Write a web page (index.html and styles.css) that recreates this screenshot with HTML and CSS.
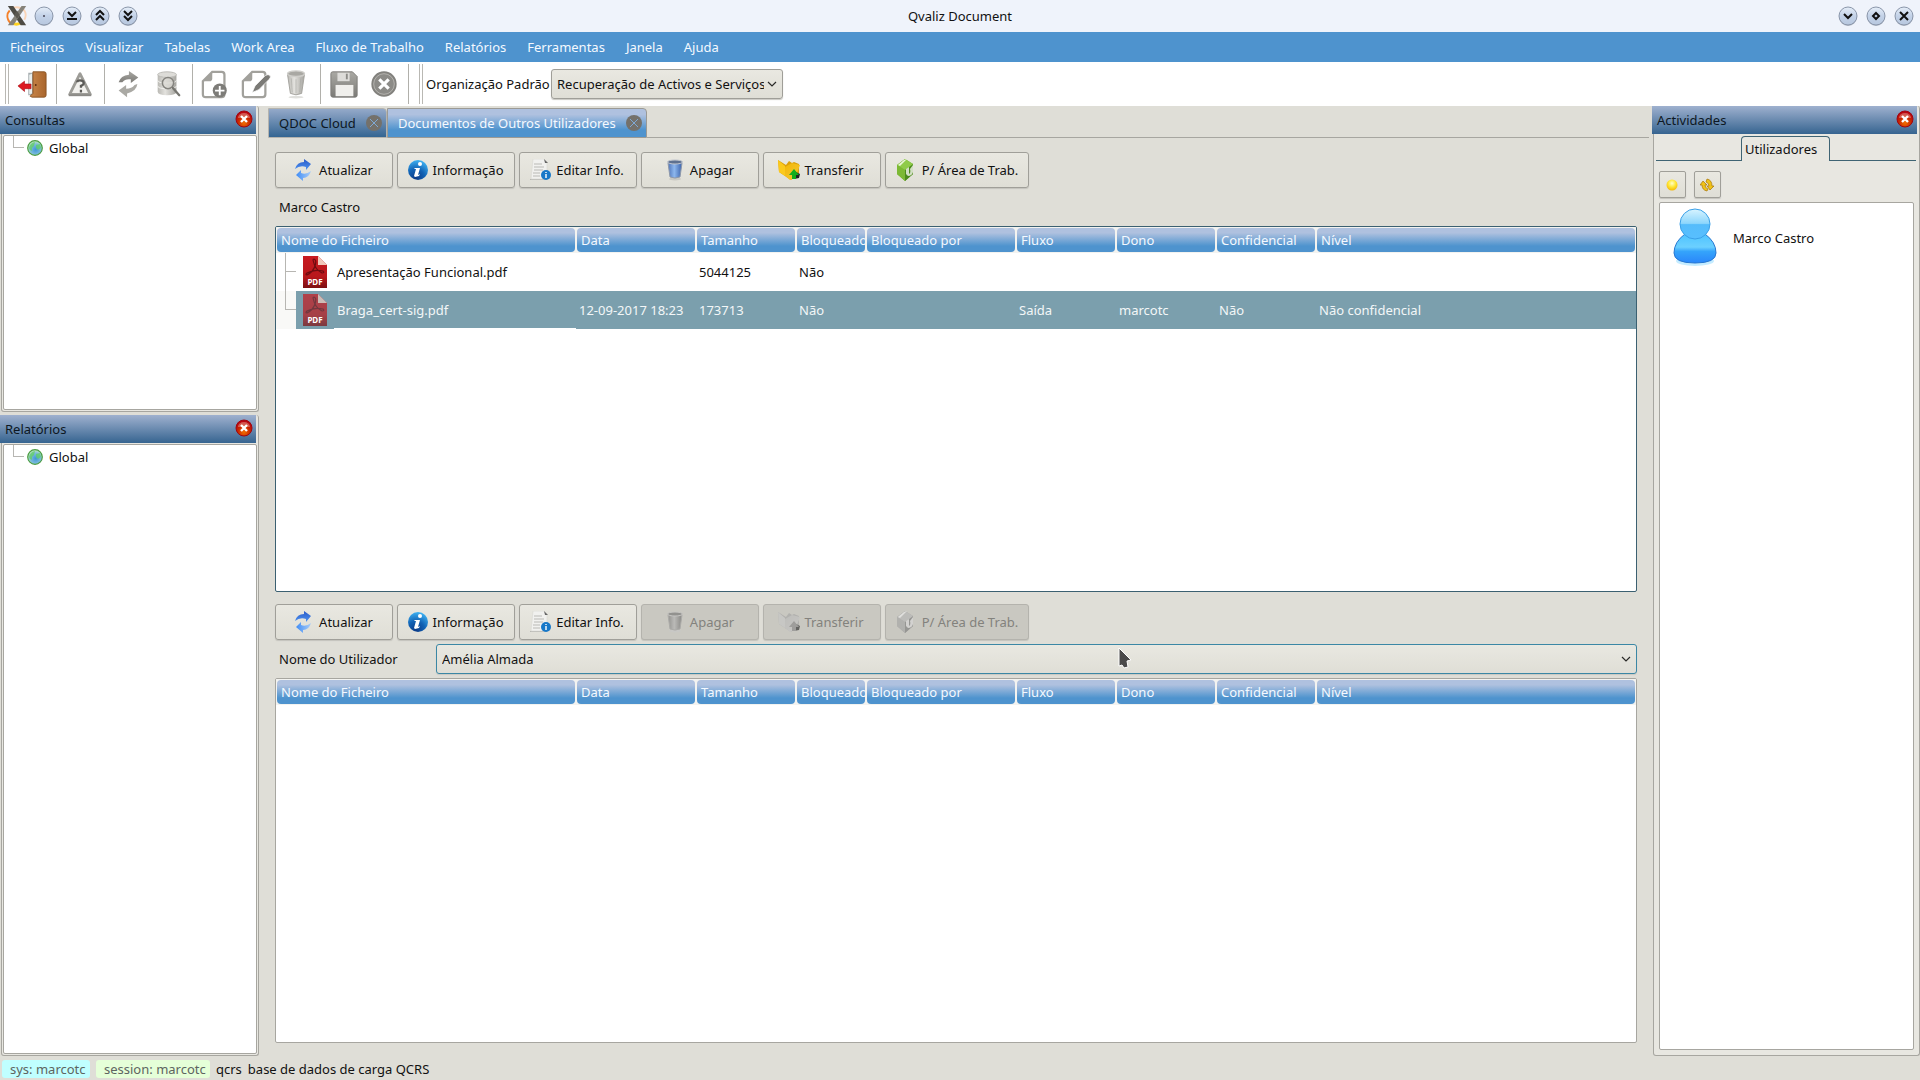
FILE: index.html
```html
<!DOCTYPE html>
<html lang="pt">
<head>
<meta charset="utf-8">
<title>Qvaliz Document</title>
<link rel="stylesheet" href="styles.css">
</head>
<body>
<svg class="defs" aria-hidden="true">
  <defs>
    <linearGradient id="gWin" x1="0" y1="0" x2="0" y2="1"><stop offset="0" stop-color="#e6eef8"/><stop offset=".5" stop-color="#c3d2e8"/><stop offset="1" stop-color="#b7c7de"/></linearGradient>
    <linearGradient id="gBlue" x1="0" y1="0" x2="0" y2="1"><stop offset="0" stop-color="#2a5bc8"/><stop offset="1" stop-color="#4f93f0"/></linearGradient>
    <linearGradient id="gBlue2" x1="0" y1="0" x2="1" y2="0"><stop offset="0" stop-color="#3f8cf5"/><stop offset="1" stop-color="#a9cdf8"/></linearGradient>
    <linearGradient id="gGrey" x1="0" y1="0" x2="0" y2="1"><stop offset="0" stop-color="#aaa9a4"/><stop offset="1" stop-color="#7b7a76"/></linearGradient>
    <linearGradient id="gLight" x1="0" y1="0" x2="1" y2="0"><stop offset="0" stop-color="#b9b8b3"/><stop offset=".4" stop-color="#e3e2de"/><stop offset="1" stop-color="#a5a49f"/></linearGradient>
    <linearGradient id="gBin" x1="0" y1="0" x2="1" y2="0"><stop offset="0" stop-color="#4f74b8"/><stop offset=".45" stop-color="#8db7ee"/><stop offset="1" stop-color="#3a62ab"/></linearGradient>
    <radialGradient id="gInfo" cx=".4" cy=".9" r=".9"><stop offset="0" stop-color="#0b3a86"/><stop offset=".5" stop-color="#1263b5"/><stop offset="1" stop-color="#3fb2f2"/></radialGradient>
    <linearGradient id="gDoor" x1="0" y1="0" x2="1" y2="0"><stop offset="0" stop-color="#c9864a"/><stop offset="1" stop-color="#a9652c"/></linearGradient>
    <linearGradient id="gPdf" x1="0" y1="0" x2="0" y2="1"><stop offset="0" stop-color="#c81a20"/><stop offset=".65" stop-color="#b8181c"/><stop offset="1" stop-color="#7c0f12"/></linearGradient>
    <radialGradient id="gRed" cx=".5" cy=".75" r=".7"><stop offset="0" stop-color="#f07000"/><stop offset=".55" stop-color="#c82400"/><stop offset="1" stop-color="#b80010"/></radialGradient>
    <radialGradient id="gGlobe" cx=".55" cy=".6" r=".6"><stop offset="0" stop-color="#3f96d8"/><stop offset=".6" stop-color="#7dbcdc"/><stop offset="1" stop-color="#c4eeb4"/></radialGradient>
    <radialGradient id="gSun" cx=".5" cy=".35" r=".65"><stop offset="0" stop-color="#ffffc8"/><stop offset=".5" stop-color="#ffe83a"/><stop offset="1" stop-color="#f5b800"/></radialGradient>
    <linearGradient id="gHead" x1="0" y1="0" x2="0" y2="1"><stop offset="0" stop-color="#d8f4ff"/><stop offset=".48" stop-color="#8dd6fc"/><stop offset=".52" stop-color="#55bcfb"/><stop offset="1" stop-color="#58bfff"/></linearGradient>
    <linearGradient id="gBody" x1="0" y1="0" x2="0" y2="1"><stop offset="0" stop-color="#4ec3ff"/><stop offset=".45" stop-color="#6cd0ff"/><stop offset=".6" stop-color="#35a4fb"/><stop offset="1" stop-color="#2a86fa"/></linearGradient>
    <linearGradient id="gFold" x1="0" y1="0" x2="1" y2="1"><stop offset="0" stop-color="#f2b606"/><stop offset="1" stop-color="#f6c832"/></linearGradient>

    <symbol id="i-win" viewBox="0 0 20 20"><circle cx="10" cy="11" r="9" fill="#8b95a5" opacity=".6"/><circle cx="10" cy="10" r="9" fill="url(#gWin)" stroke="#8a96aa"/></symbol>
    <symbol id="i-x" viewBox="0 0 24 24"><path d="M4 6a9 9 0 0 0-2 9q1 4 5 6" fill="none" stroke="#f4802a" stroke-width="2"/><path d="M8 3q7-2 12 3 3 5 0 10" fill="none" stroke="#fbd5b8" stroke-width="2"/><path d="M7 20q4 2 9 0" fill="none" stroke="#ffd21f" stroke-width="3"/><path d="M2 1h6l14 21h-6z" fill="#4d4b45"/><path d="M17 1h5L8 22H2z" fill="#85827a"/><path d="M9 10l3-4 3 5-3 4z" fill="#5a5750"/></symbol>
    <symbol id="i-close" viewBox="0 0 18 18"><circle cx="9" cy="9" r="8" fill="url(#gRed)" stroke="#a00610"/><path d="M3 8a6 5 0 0 1 12 0z" fill="#fff" opacity=".3"/><path d="M6 6l6 6M12 6l-6 6" stroke="#fff" stroke-width="2.4"/></symbol>
    <symbol id="i-tabx" viewBox="0 0 16 16"><circle cx="8" cy="8" r="8" fill="#74716b"/><path d="M4 4l8 8M12 4l-8 8" stroke="#7fa9d3" stroke-width="1"/></symbol>
    <symbol id="i-globe" viewBox="0 0 16 16"><circle cx="8" cy="8" r="7.3" fill="url(#gGlobe)" stroke="#4a9c42" stroke-width="1.2"/><path d="M2 8q1-5 6-6l-1 4-2 2v3q-2 0-3-3M9 5l4-1 1 4-3 2-2-2z" fill="#62cf60" opacity=".75"/></symbol>
    <symbol id="i-door" viewBox="0 0 32 32"><path d="M12 4h6v24h-6z" fill="#a7aeb0"/><path d="M13 6l3-1v21l-3 1z" fill="#e9eeee"/><path d="M17 3h12q2 0 2 2v23q0 2-2 2H16l-2-1 3-3z" fill="url(#gDoor)" stroke="#8a5424"/><circle cx="20" cy="17" r="1" fill="#5b2c0e"/><path d="M1 18l7-5v3h7v5H8v3z" fill="#dd1a22" stroke="#a50c12" stroke-width=".6"/></symbol>
    <symbol id="i-warn" viewBox="0 0 32 32"><path d="M16 5L5 27h22z" fill="#f2f1ee" stroke="#9d9c97" stroke-width="3" stroke-linejoin="round"/><path d="M4 28h24" stroke="#8b8a86" stroke-width="2"/><path d="M13 14q0-2 3-2 4 0 4 3 0 2-3 3v2M17 22v3" fill="none" stroke="#5c5b58" stroke-width="2.4"/></symbol>
    <symbol id="i-sync-g" viewBox="0 0 32 32"><path d="M6 14q2-7 11-8V2l10 7-8 6v-4q-6-1-9 3z" fill="url(#gGrey)"/><path d="M26 16q-1 8-11 10v4L6 23l8-6v4q6 0 9-4z" fill="#aaa9a4"/></symbol>
    <symbol id="i-dbfind" viewBox="0 0 32 32"><path d="M5 6v18q0 4 10 4t10-4V6z" fill="url(#gLight)"/><path d="M5 12q0 3 10 3t10-3M5 18q0 3 10 3t10-3" fill="none" stroke="#f2f2ef"/><ellipse cx="15" cy="6" rx="10" ry="3" fill="#dddcd8" stroke="#bab9b4"/><circle cx="16" cy="15" r="6" fill="#d8d7d2" fill-opacity=".7" stroke="#85847f" stroke-width="1.6"/><path d="M21 20l7 8" stroke="#777671" stroke-width="2.4" stroke-linecap="round"/></symbol>
    <symbol id="i-docadd" viewBox="0 0 32 32"><path d="M12 3h10q3 0 3 3v21q0 3-3 3H5q-3 0-3-3V13z" fill="#fff" stroke="#a2a19c" stroke-width="2.4"/><path d="M12 3v7q0 3-3 3H2z" fill="#a2a19c"/><circle cx="20" cy="23" r="7.5" fill="#7d7c78"/><path d="M20 18v10M15 23h10" stroke="#fff" stroke-width="2"/></symbol>
    <symbol id="i-docedit" viewBox="0 0 32 32"><path d="M12 3h11q3 0 3 3v21q0 3-3 3H5q-3 0-3-3V13z" fill="#fff" stroke="#a2a19c" stroke-width="2.4"/><path d="M12 3v7q0 3-3 3H2z" fill="#a2a19c"/><path d="M12 25l3-7L26 7q3-2 5 0 1 2-1 4L19 22z" fill="#7b7a76" stroke="#fff" stroke-width=".7"/></symbol>
    <symbol id="i-bin-g" viewBox="0 0 32 32"><ellipse cx="16" cy="30" rx="8" ry="1.5" fill="#e0e0dd"/><path d="M7 6h18l-3 20q-6 3-12 0z" fill="url(#gLight)" stroke="#a3a29d"/><path d="M11 10l1 15M16 11v15M21 10l-1 15" stroke="#a8a7a2" opacity=".6"/><ellipse cx="16" cy="5" rx="9" ry="3" fill="#a9a8a3" stroke="#cfceca" stroke-width="1.5"/></symbol>
    <symbol id="i-save" viewBox="0 0 32 32"><path d="M4 3h21l5 5v20q0 2-2 2H4q-2 0-2-2V5q0-2 2-2z" fill="url(#gGrey)" stroke="#7d7c77"/><path d="M9 4h13v9H9z" fill="#dddcd9"/><path d="M18 5h2v6h-2z" fill="#8d8c88"/><path d="M7 17h19v12H7z" fill="#f0efec"/></symbol>
    <symbol id="i-cancel" viewBox="0 0 32 32"><circle cx="16" cy="16" r="12.5" fill="#8c8b87" stroke="#82817d" stroke-width="2"/><circle cx="16" cy="16" r="11" fill="none" stroke="#c6c5c1" stroke-width=".7"/><path d="M11 11l10 10M21 11L11 21" stroke="#fff" stroke-width="3.4"/></symbol>
    <symbol id="i-sync" viewBox="0 0 22 22"><path d="M2 10Q4 3 11 3V0l7 5-5 6V8Q7 6 2 10z" fill="url(#gBlue)"/><path d="M18 12q-2 7-8 7v3l-7-6 5-5v3q5 2 10-2z" fill="url(#gBlue2)"/></symbol>
    <symbol id="i-info" viewBox="0 0 22 22"><circle cx="11" cy="11" r="10" fill="url(#gInfo)"/><circle cx="13" cy="5" r="2" fill="#fff"/><path d="M8 9h5l-2 7 2-1-1 2-4 1-1-1 2-7H7z" fill="#fff"/></symbol>
    <symbol id="i-edit" viewBox="0 0 22 22"><path d="M0 20h15v1H0z" fill="#b9b9b5"/><path d="M3 0h11l3 4v16H1z" fill="#f1f1ef" stroke="#d6d6d2" stroke-width=".6"/><path d="M14 0l4 4h-3z" fill="#666"/><path d="M4 5h8M4 8h10M4 11h9M3 14h7M3 17h7" stroke="#b9b9b5"/><circle cx="16" cy="16" r="5" fill="#1878c8"/><path d="M16 13v1M16 15v4" stroke="#fff" stroke-width="1.4"/></symbol>
    <symbol id="i-bin" viewBox="0 0 22 22"><ellipse cx="11" cy="20" rx="6" ry="1.5" fill="#c9c8c2"/><path d="M4 4h14l-2 14q-5 2-10 0z" fill="url(#gBin)" stroke="#8f99aa"/><ellipse cx="11" cy="3" rx="7.5" ry="2" fill="#5e7190" stroke="#c0c5ce"/></symbol>
    <symbol id="i-folder" viewBox="0 0 22 22"><path d="M0 1l8 5 3-4 3 2 2-1 5 2v9l-8 7L1 13z" fill="#dba00a"/><path d="M7 8l7-4 8 2-5 13-5 2-6-5z" fill="url(#gFold)"/><path d="M0 1l7 6v10l-6-4z" fill="#fbc91c"/><path d="M16 20l5-1 1-4-4-2z" fill="#222"/><path d="M16 10l5 6h-3v4h-4v-4h-3z" fill="#12ad1c"/></symbol>
    <symbol id="i-cube" viewBox="0 0 22 22"><path d="M11 0l8 5v10l-8 7-8-7V6z" fill="#68a52b"/><path d="M3 6l8 5v11l-8-7z" fill="#7cb934"/><path d="M11 11l8-6v10l-8 7z" fill="#4c8a1d"/><path d="M11 0l8 5-8 6-8-5z" fill="#8fcb49"/><path d="M10 1l3-1-7 7-2-1z" fill="#e9f5d8"/><path d="M12 10l3-2v7q2-1 1-5l3-4v7q-1 4-5 4l-2-2z" fill="#d2dfc4"/></symbol>
    <symbol id="i-pdf" viewBox="0 0 24 32"><path d="M0 0h15l9 9v23H0z" fill="url(#gPdf)"/><path d="M15 0l9 9h-9z" fill="#f0c9bb"/><path d="M11 3q3 1 1 7-2 6-8 9-2 0 0-2 7-4 16-2 2 2-1 2-7-3-9-13 0-1 1-1z" fill="none" stroke="#6d0c10" stroke-width="1.2"/></symbol>
    <symbol id="i-sun" viewBox="0 0 14 14"><circle cx="7" cy="7" r="5.5" fill="url(#gSun)"/></symbol>
    <symbol id="i-cycle" viewBox="0 0 14 14"><path d="M0 7l3-4 4 4H5q0 3 3 4l-1 2q-5-1-5-6zM14 8l-4 4-3-4h2q0-3-3-4l1-3q5 1 5 7z" fill="#f0c216" stroke="#a8750a" stroke-width=".7"/></symbol>
    <symbol id="i-user" viewBox="0 0 44 60"><ellipse cx="22" cy="53" rx="19" ry="5" fill="#9fe0ff" opacity=".6"/><path d="M12 26Q1 34 1 45q0 10 21 10t21-10q0-11-11-19z" fill="url(#gBody)" stroke="#2877d0"/><circle cx="22" cy="16" r="15" fill="url(#gHead)" stroke="#3aa0e8"/></symbol>
    <symbol id="i-down" viewBox="0 0 12 8"><path d="M2 2l4 4 4-4" fill="none" stroke="#2a2a28" stroke-width="1.2"/></symbol>
  </defs>
</svg>

<div class="window">
  <header class="titlebar">
    <div class="winbtns">
      <svg class="applogo"><use href="#i-x"/></svg>
      <button class="wbtn" aria-label="Menu"><svg viewBox="0 0 20 20"><use href="#i-win"/><path d="M9 10h2" stroke="#445" stroke-width="1.5"/></svg></button>
      <button class="wbtn" aria-label="Sombra"><svg viewBox="0 0 20 20"><use href="#i-win"/><path d="M6 6l4 4 4-4M5 13h10" class="mark"/></svg></button>
      <button class="wbtn" aria-label="Acima"><svg viewBox="0 0 20 20"><use href="#i-win"/><path d="M6 9l4-4 4 4M6 14l4-4 4 4" class="mark"/></svg></button>
      <button class="wbtn" aria-label="Abaixo"><svg viewBox="0 0 20 20"><use href="#i-win"/><path d="M6 5l4 4 4-4M6 10l4 4 4-4" class="mark"/></svg></button>
    </div>
    <h1 class="title">Qvaliz Document</h1>
    <div class="winbtns right">
      <button class="wbtn" aria-label="Minimizar"><svg viewBox="0 0 20 20"><use href="#i-win"/><path d="M6 8l4 4 4-4" class="mark"/></svg></button>
      <button class="wbtn" aria-label="Maximizar"><svg viewBox="0 0 20 20"><use href="#i-win"/><path d="M10 7l3 3-3 3-3-3z" class="mark"/></svg></button>
      <button class="wbtn" aria-label="Fechar"><svg viewBox="0 0 20 20"><use href="#i-win"/><path d="M6 6l8 8M14 6l-8 8" class="mark"/></svg></button>
    </div>
  </header>

  <nav class="menubar">
    <a href="#">Ficheiros</a><a href="#">Visualizar</a><a href="#">Tabelas</a><a href="#">Work Area</a><a href="#">Fluxo de Trabalho</a><a href="#">Relatórios</a><a href="#">Ferramentas</a><a href="#">Janela</a><a href="#">Ajuda</a>
  </nav>

  <div class="toolbar">
    <span class="handle"></span>
    <button class="tool" aria-label="Sair"><svg><use href="#i-door"/></svg></button>
    <span class="sep"></span>
    <button class="tool" aria-label="Aviso"><svg><use href="#i-warn"/></svg></button>
    <span class="sep"></span>
    <button class="tool" aria-label="Atualizar"><svg><use href="#i-sync-g"/></svg></button>
    <button class="tool" aria-label="Pesquisar"><svg><use href="#i-dbfind"/></svg></button>
    <span class="sep"></span>
    <button class="tool" aria-label="Novo"><svg><use href="#i-docadd"/></svg></button>
    <button class="tool" aria-label="Editar"><svg><use href="#i-docedit"/></svg></button>
    <button class="tool" aria-label="Apagar"><svg><use href="#i-bin-g"/></svg></button>
    <span class="sep"></span>
    <button class="tool" aria-label="Guardar"><svg><use href="#i-save"/></svg></button>
    <button class="tool" aria-label="Cancelar"><svg><use href="#i-cancel"/></svg></button>
    <span class="sep"></span>
    <span class="handle second"></span>
    <label for="org">Organização Padrão</label>
    <div class="combo org">
      <select id="org"><option>Recuperação de Activos e Serviços</option></select>
      <svg class="arrow"><use href="#i-down"/></svg>
    </div>
  </div>

  <div class="workspace">
    <aside class="leftcol">
      <section class="dock queries">
        <header class="dockhead"><h2>Consultas</h2><button class="dockclose" aria-label="Fechar"><svg><use href="#i-close"/></svg></button></header>
        <div class="tree"><div class="node"><span class="elbow"></span><svg><use href="#i-globe"/></svg><span>Global</span></div></div>
      </section>
      <section class="dock reports">
        <header class="dockhead"><h2>Relatórios</h2><button class="dockclose" aria-label="Fechar"><svg><use href="#i-close"/></svg></button></header>
        <div class="tree"><div class="node"><span class="elbow"></span><svg><use href="#i-globe"/></svg><span>Global</span></div></div>
      </section>
    </aside>

    <main class="center">
      <div class="tabs">
        <div class="tab"><span>QDOC Cloud</span><button aria-label="Fechar"><svg><use href="#i-tabx"/></svg></button></div>
        <div class="tab active"><span>Documentos de Outros Utilizadores</span><button aria-label="Fechar"><svg><use href="#i-tabx"/></svg></button></div>
        <span class="tabline"></span>
      </div>
      <div class="content">
        <div class="actions">
          <button class="btn"><svg><use href="#i-sync"/></svg>Atualizar</button>
          <button class="btn"><svg><use href="#i-info"/></svg>Informação</button>
          <button class="btn"><svg><use href="#i-edit"/></svg>Editar Info.</button>
          <button class="btn"><svg><use href="#i-bin"/></svg>Apagar</button>
          <button class="btn"><svg><use href="#i-folder"/></svg>Transferir</button>
          <button class="btn wide"><svg><use href="#i-cube"/></svg>P/ Área de Trab.</button>
        </div>
        <p class="owner">Marco Castro</p>
        <div class="grid focused">
          <table>
            <colgroup><col class="c300"><col class="c120"><col class="c100"><col class="c70"><col class="c150"><col class="c100"><col class="c100"><col class="c100"><col></colgroup>
            <thead><tr><th><span>Nome do Ficheiro</span></th><th><span>Data</span></th><th><span>Tamanho</span></th><th><span>Bloqueado</span></th><th><span>Bloqueado por</span></th><th><span>Fluxo</span></th><th><span>Dono</span></th><th><span>Confidencial</span></th><th><span>Nível</span></th></tr></thead>
            <tbody>
              <tr><td><div class="file"><span class="branch mid"></span><span class="pdf"><svg><use href="#i-pdf"/></svg><b>PDF</b></span><span class="name">Apresentação Funcional.pdf</span></div></td><td></td><td>5044125</td><td>Não</td><td></td><td></td><td></td><td></td><td></td></tr>
              <tr class="selected"><td><div class="file"><span class="branch"></span><span class="pdf"><svg><use href="#i-pdf"/></svg><b>PDF</b></span><span class="name">Braga_cert-sig.pdf</span></div></td><td>12-09-2017 18:23</td><td>173713</td><td>Não</td><td></td><td>Saída</td><td>marcotc</td><td>Não</td><td>Não confidencial</td></tr>
            </tbody>
          </table>
        </div>
        <div class="actions lower">
          <button class="btn"><svg><use href="#i-sync"/></svg>Atualizar</button>
          <button class="btn"><svg><use href="#i-info"/></svg>Informação</button>
          <button class="btn"><svg><use href="#i-edit"/></svg>Editar Info.</button>
          <button class="btn" disabled><svg><use href="#i-bin"/></svg>Apagar</button>
          <button class="btn" disabled><svg><use href="#i-folder"/></svg>Transferir</button>
          <button class="btn wide" disabled><svg><use href="#i-cube"/></svg>P/ Área de Trab.</button>
        </div>
        <div class="userrow">
          <label for="user">Nome do Utilizador</label>
          <div class="combo user">
            <select id="user"><option>Amélia Almada</option></select>
            <svg class="arrow"><use href="#i-down"/></svg>
            <svg class="cursor" viewBox="0 0 14 22"><path d="M1 1l12 12-4 1 1 6-4 1-2-3-3 1z" fill="#4a4a4a" stroke="#fff" stroke-width="1"/></svg>
          </div>
        </div>
        <div class="grid">
          <table>
            <colgroup><col class="c300"><col class="c120"><col class="c100"><col class="c70"><col class="c150"><col class="c100"><col class="c100"><col class="c100"><col></colgroup>
            <thead><tr><th><span>Nome do Ficheiro</span></th><th><span>Data</span></th><th><span>Tamanho</span></th><th><span>Bloqueado</span></th><th><span>Bloqueado por</span></th><th><span>Fluxo</span></th><th><span>Dono</span></th><th><span>Confidencial</span></th><th><span>Nível</span></th></tr></thead>
          </table>
        </div>
      </div>
    </main>

    <aside class="rightcol">
      <section class="dock activities">
        <header class="dockhead"><h2>Actividades</h2><button class="dockclose" aria-label="Fechar"><svg><use href="#i-close"/></svg></button></header>
        <div class="panel">
          <div class="minitabs"><span class="rule l"></span><span class="minitab">Utilizadores</span><span class="rule r"></span></div>
          <div class="minibtns">
            <button class="mini" aria-label="Estado"><svg><use href="#i-sun"/></svg></button>
            <button class="mini" aria-label="Atualizar"><svg><use href="#i-cycle"/></svg></button>
          </div>
          <div class="users"><div class="person"><svg><use href="#i-user"/></svg><span>Marco Castro</span></div></div>
        </div>
      </section>
    </aside>
  </div>

  <footer class="status">
    <span class="chip sys">sys: marcotc</span><span class="chip session">session: marcotc</span><span>qcrs</span><span class="db">base de dados de carga QCRS</span>
  </footer>
</div>
</body>
</html>
```
FILE: styles.css
```css
* { box-sizing: border-box; }
body { margin: 0; background: #dfded7; color: #111; font: 13px/18px "Noto Sans", "Liberation Sans", sans-serif; }
button, select { font: inherit; color: inherit; margin: 0; padding: 0; border: 0; background: none; }
h1, h2, p { margin: 0; font-size: inherit; font-weight: normal; }
svg { display: block; flex: none; }
.defs { position: absolute; width: 0; height: 0; }
.window { display: flex; flex-direction: column; height: 100vh; overflow: hidden; }

.titlebar { display: grid; grid-template-columns: 1fr auto 1fr; align-items: center; height: 32px; padding: 0 6px; background: #eff3fb; }
.winbtns { display: flex; align-items: center; gap: 8px; }
.winbtns.right { justify-content: flex-end; }
.applogo { width: 22px; height: 24px; margin-right: -2px; }
.wbtn, .wbtn svg { width: 20px; height: 20px; }
.mark { fill: none; stroke: #111; stroke-width: 2; }

.menubar { display: flex; align-items: center; gap: 21px; height: 30px; padding-left: 10px; background: #4e93ce; }
.menubar a { color: #f4f9ff; text-decoration: none; }

.toolbar { display: flex; align-items: center; height: 44px; background: #fff; }
.handle { width: 4px; height: 40px; margin: 0 3px 0 5px; border: solid #b9b8b3; border-width: 0 1px; }
.handle.second { margin: 0 3px 0 7px; }
.tool { display: flex; align-items: center; justify-content: center; width: 40px; height: 40px; }
.tool svg { width: 30px; height: 30px; }
.sep { width: 8px; height: 40px; background: linear-gradient(#b1b0ab, #b1b0ab) center / 1px 100% no-repeat; }
.toolbar label { width: 125px; white-space: nowrap; }

.combo { position: relative; height: 30px; }
.combo select { display: block; width: 100%; height: 30px; padding: 0 18px 0 5px; appearance: none; border: 1px solid #9f9e98; border-radius: 3px; background: linear-gradient(#e9e8e1, #dfded6); box-shadow: 0 1px 1px #c9c8c2; }
.combo.org { width: 232px; }
.arrow { position: absolute; right: 5px; top: 11px; width: 12px; height: 8px; pointer-events: none; }
.cursor { position: absolute; left: 682px; top: 3px; width: 14px; height: 22px; pointer-events: none; }

.workspace { display: flex; flex: 1; min-height: 0; }
.leftcol { display: flex; flex-direction: column; gap: 3px; width: 259px; }
.rightcol { display: flex; width: 268px; margin-left: 3px; }
.dock { display: flex; flex-direction: column; border: 1px solid #a7a6a0; border-top: 0; border-radius: 3px; background: #e8e7e1; }
.leftcol .dock { margin-left: 1px; padding: 0 1px 1px; }
.queries { flex: 10 1 0; }
.reports { flex: 21 1 0; }
.activities { flex: 1; margin-left: 1px; }
.dockhead { display: flex; align-items: center; justify-content: space-between; height: 28px; margin: 0 1px 0 -3px; padding: 0 3px 0 5px; background: linear-gradient(#9fb1cf, #366490); }
.activities .dockhead { margin: 0 2px 0 -2px; }
.dockhead h2 { color: #0d1722; }
.dockclose { margin-top: -2px; }
.dockclose svg { width: 18px; height: 18px; }
.tree { flex: 1; margin-top: 1px; border: 1px solid #a7a6a0; border-radius: 2px; background: #fff; }
.node { display: flex; height: 24px; padding-left: 9px; }
.elbow { width: 11px; height: 12px; margin-right: 3px; border: solid #b7b6b2; border-width: 0 0 1px 1px; }
.node svg { width: 16px; height: 16px; margin: 4px 6px 0 0; }
.node > span:last-child { margin-top: 3px; }

.center { display: flex; flex: 1; flex-direction: column; min-width: 0; padding: 2px 0 0 9px; }
.tabs { display: flex; height: 30px; }
.tab { display: flex; align-items: center; justify-content: space-between; width: 119px; padding: 0 4px 0 10px; border: 1px solid #b4b3ae; border-radius: 0 4px 0 0; background: linear-gradient(#94a9c9, #346592); color: #0d1722; }
.tab.active { width: 260px; border-color: #9b9a95; background: linear-gradient(#afc1df, #afc1df 20%, #4e93ce 75%); color: #f4f9ff; }
.tab svg { width: 16px; height: 16px; }
.tabline { flex: 1; border-bottom: 1px solid #a7a6a0; }

.content { display: flex; flex: 1; flex-direction: column; min-height: 0; padding: 14px 12px 13px 7px; }
.actions { display: flex; gap: 4px; flex: none; }
.btn { display: flex; align-items: center; justify-content: center; gap: 4px; width: 118px; height: 36px; padding-right: 2px; border: 1px solid #a09f99; border-radius: 3px; background: linear-gradient(#e9e8e1, #dfded6); box-shadow: 0 1px 1px #c4c3bd; }
.btn.wide { gap: 6px; width: 144px; }
.btn svg { width: 22px; height: 22px; }
.btn:disabled { border-color: #b4b3ad; background: #c9c8c1; color: #83827d; }
.btn:disabled svg { filter: grayscale(1); opacity: .6; }
.owner { height: 38px; padding: 10px 0 0 4px; }
.grid { flex: 1 1 0; border: 1px solid #a7a6a0; border-radius: 2px; background: #fff; overflow: hidden; }
.grid.focused { border-color: #3b6071; }
.lower { margin-top: 12px; }
.userrow { display: flex; align-items: center; height: 30px; margin: 4px 0; }
.userrow label { width: 161px; padding-left: 4px; }
.combo.user { flex: 1; }
.combo.user select { border-color: #3b87a5; }

table { width: 100%; table-layout: fixed; border-collapse: separate; border-spacing: 0; }
.c300 { width: 300px; }
.c120 { width: 120px; }
.c100 { width: 100px; }
.c70 { width: 70px; }
.c150 { width: 150px; }
th { height: 26px; padding: 0 1px; background: #f3f3f0; font-weight: normal; text-align: left; }
th span { display: block; height: 24px; padding: 3px 0 0 4px; border-radius: 4px; background: linear-gradient(#afc1df, #afc1df 20%, #4e93ce 75%); color: #f4f9ff; white-space: nowrap; overflow: hidden; }
td { height: 38px; padding: 0 0 0 3px; white-space: nowrap; }
td:first-child { padding: 0; }
.selected td { background: #7b9fad; color: #f3f7f8; }
.file { display: flex; align-items: center; height: 38px; }
.branch { align-self: stretch; width: 20px; background: linear-gradient(#b7b6b2, #b7b6b2) 9px 0 / 1px 19px no-repeat, linear-gradient(#b7b6b2, #b7b6b2) 9px 18px / 11px 1px no-repeat, #f9f9f7; }
.branch.mid { background: linear-gradient(#b7b6b2, #b7b6b2) 9px 0 / 1px 38px no-repeat, linear-gradient(#b7b6b2, #b7b6b2) 9px 18px / 11px 1px no-repeat; }
.pdf { position: relative; width: 24px; height: 32px; margin: 0 7px; }
.pdf svg { width: 24px; height: 32px; }
.pdf b { position: absolute; left: 0; right: 0; bottom: 1px; color: #fff; font: bold 8px/10px "Noto Sans", sans-serif; text-align: center; }
.name { display: flex; flex: 1; align-items: center; align-self: stretch; padding-left: 3px; }
.selected .name { border-bottom: 1px solid #fff; }
.selected .pdf svg { opacity: .7; }

.panel { display: flex; flex: 1; flex-direction: column; padding: 2px 5px 5px; }
.minitabs { display: flex; height: 25px; margin: 0 -2px 0 -3px; }
.rule { border-bottom: 1px solid #3f6474; }
.rule.l { width: 85px; }
.rule.r { flex: 1; }
.minitab { width: 89px; padding: 3px 0 0 3px; border: 1px solid #3f6474; border-bottom: 0; border-radius: 4px 4px 0 0; }
.minibtns { display: flex; gap: 8px; margin: 10px 0 4px; }
.mini { display: flex; align-items: center; justify-content: center; width: 27px; height: 27px; padding-right: 1px; border: 1px solid #a09f99; border-radius: 2px; background: linear-gradient(#e9e8e1, #dfded6); box-shadow: 0 1px 1px #c4c3bd; }
.mini svg { width: 14px; height: 14px; }
.users { flex: 1; border: 1px solid #a7a6a0; border-radius: 2px; background: #fff; }
.person { display: flex; align-items: center; gap: 16px; padding: 5px 0 0 13px; }
.person svg { width: 44px; height: 60px; }

.status { display: flex; align-items: center; flex: none; height: 24px; padding: 2px 0 0 2px; }
.chip { height: 18px; margin-right: 6px; border-radius: 3px; color: #5d6560; line-height: 18px; }
.chip.sys { width: 88px; padding-left: 8px; background: #c0ffff; }
.chip.session { width: 114px; padding-left: 8px; background: #e5ffd8; }
.db { margin-left: 6px; }
```
